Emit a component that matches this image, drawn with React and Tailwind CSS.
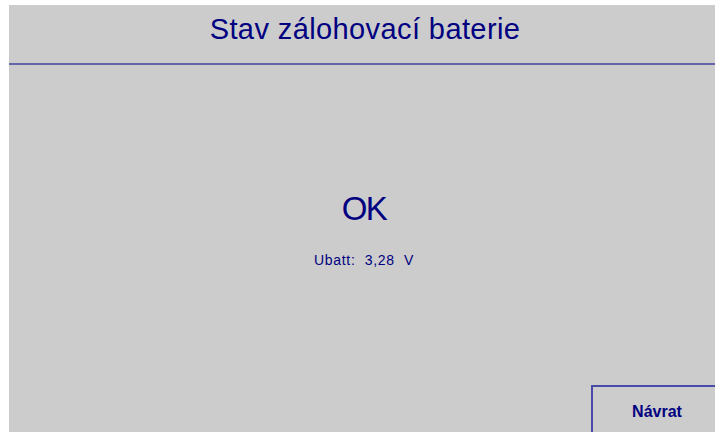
export default function App() {
  return (
    <div className="w-[715px] h-[432px] bg-white pt-[5px] pl-[9px] overflow-hidden" style={{ fontFamily: '"Liberation Sans", Arial, sans-serif' }}>
      <div className="relative h-full w-full bg-[#cccccc] flex flex-col">
        <header className="h-[60px] flex items-center justify-center pb-[10px] pl-[6px] border-b-2 border-[#6466a8]">
          <h1 className="text-[29px] leading-none text-[#000080] tracking-[0.4px]">Stav zálohovací baterie</h1>
        </header>
        <main className="flex-1 flex flex-col items-center pt-[127px] pl-[4px]">
          <div className="text-[33px] leading-none text-[#000080] tracking-[-1.5px]">OK</div>
          <div className="mt-[28px] text-[14px] leading-none text-[#000080] tracking-[0.7px]">Ubatt:&nbsp; 3,28&nbsp; V</div>
        </main>
        <button className="absolute left-[582px] top-[380px] w-[140px] h-[60px] border-2 border-[#4a4aa8] flex items-start justify-center pt-[13px] pr-[8px] text-[16px] font-bold text-[#000080]">
          Návrat
        </button>
      </div>
    </div>
  );
}
